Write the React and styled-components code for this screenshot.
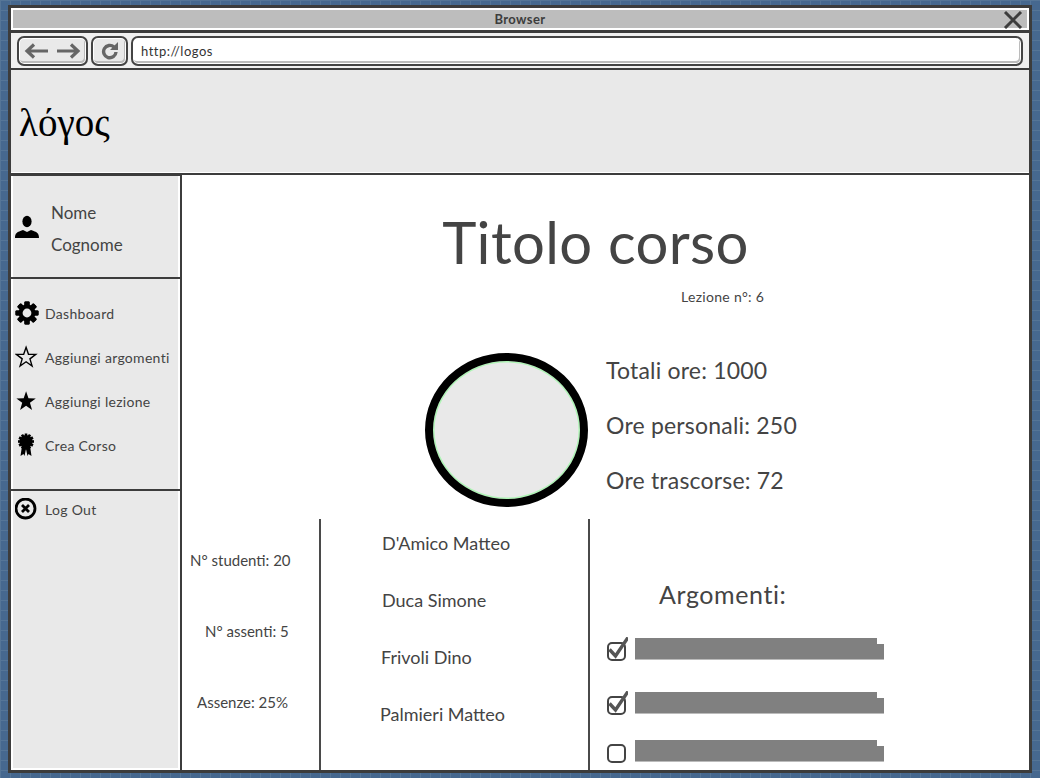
import React from "react";
import styled, { createGlobalStyle } from "styled-components";

const hand = `"Lato", "Noto Sans", sans-serif`;

const Global = createGlobalStyle`
  html, body { margin: 0; padding: 0; height: 778px; overflow: hidden; }
  body {
    font-family: ${hand};
    background-color: #46688f;
    background-image:
      linear-gradient(to right, #557597 1px, transparent 1px),
      linear-gradient(to bottom, #557597 1px, transparent 1px);
    background-size: 10px 10px;
  }
`;

const Frame = styled.div`
  box-sizing: border-box;
  margin: 5px 8px;
  width: 1024px;
  height: 768px;
  border: 3px solid #3c3c3c;
  background: #fff;
  display: flex;
  flex-direction: column;
`;
const TitleBar = styled.div`
  height: 22px;
  padding: 2px;
  box-sizing: border-box;
  flex: none;
`;
const TitleInner = styled.div`
  height: 18px;
  background: #bdbdbd;
  position: relative;
  display: flex;
  align-items: center;
  justify-content: center;
  font-size: 13px;
  font-weight: 700;
  color: #3c3c3c;
  letter-spacing: 0.4px;
`;
const CloseIcon = styled.svg`
  position: absolute;
  right: 4px;
  top: 1px;
`;
const Toolbar = styled.div`
  height: 40px;
  box-sizing: border-box;
  border-top: 3px solid #3c3c3c;
  border-bottom: 2px solid #3c3c3c;
  background: #f0f0f0;
  display: flex;
  align-items: center;
  gap: 3px;
  padding: 0 6px 0 6px;
  flex: none;
`;
const ToolBtn = styled.div`
  box-sizing: border-box;
  height: 30px;
  width: ${(p) => p.$w}px;
  border: 2px solid #444;
  border-radius: 7px;
  box-shadow: inset 0 0 0 1px #fff, inset -1px -2px 0 1px #bbb;
  background: #e9e9e9;
  display: flex;
  align-items: center;
  justify-content: center;
  gap: 7px;
  flex: none;
`;
const UrlBox = styled(ToolBtn)`
  flex: 1;
  background: #fff;
  justify-content: flex-start;
  padding-left: 8px;
  font-size: 13px;
  color: #333;
  letter-spacing: 0.5px;
`;
const Header = styled.div`
  height: 103px;
  box-sizing: border-box;
  background: #e9e9e9;
  border-bottom: 1px solid #fff;
  display: flex;
  align-items: center;
  padding: 3px 0 0 8px;
  font-family: "Liberation Serif", serif;
  font-size: 39px;
  color: #000;
  flex: none;
`;
const Body = styled.div`
  flex: 1;
  min-height: 0;
  border-top: 2px solid #3c3c3c;
  display: flex;
`;
const Sidebar = styled.aside`
  width: 171px;
  box-sizing: border-box;
  flex: none;
  background: #e9e9e9;
  border-right: 2px solid #3c3c3c;
  box-shadow: inset 2px 0 0 #fff, inset -2px 0 0 #fff, inset 0 -2px 0 #fff;
  display: flex;
  flex-direction: column;
`;
const UserBlock = styled.div`
  height: 104px;
  box-sizing: border-box;
  border-top: 1px solid #3c3c3c;
  border-bottom: 2px solid #3c3c3c;
  display: flex;
  align-items: center;
  gap: 12px;
  margin-left: -3px;
  padding-left: 7px;
`;
const UserName = styled.div`
  display: flex;
  flex-direction: column;
  gap: 12px;
  margin-top: 5px;
  font-size: 17px;
  line-height: 20px;
  color: #444;
`;
const Menu = styled.nav`
  height: 212px;
  box-sizing: border-box;
  border-bottom: 2px solid #3c3c3c;
  margin-left: -3px;
  padding: 20px 0 0 7px;
  display: flex;
  flex-direction: column;
  gap: 16px;
`;
const MenuItem = styled.div`
  height: 28px;
  display: flex;
  align-items: center;
  gap: 6px;
  font-size: 14px;
  letter-spacing: 0.3px;
  color: #444;
  white-space: nowrap;
`;
const LogoutItem = styled(MenuItem)`
  padding: 4px 0 0 4px;
  gap: 7px;
`;
const Main = styled.main`
  flex: 1;
  min-width: 0;
  display: flex;
  flex-direction: column;
`;
const Title = styled.h1`
  margin: 31px 0 0;
  padding-right: 20px;
  text-align: center;
  font-weight: 400;
  font-size: 58px;
  line-height: 72px;
  letter-spacing: 0.4px;
  color: #444;
`;
const Lesson = styled.div`
  margin: 10px 0 0 499px;
  font-size: 14px;
  line-height: 18px;
  letter-spacing: 0.3px;
  color: #444;
`;
const Stats = styled.section`
  display: flex;
  margin: 47px 0 0 243px;
  height: 166px;
  flex: none;
`;
const Gauge = styled.div`
  width: 163px;
  height: 154px;
  box-sizing: border-box;
  border-radius: 50%;
  border: 8px solid #000;
  background: #e9e9e9;
  box-shadow: inset 0 0 0 1.5px #aef5b5;
  flex: none;
`;
const StatList = styled.div`
  margin: 5px 0 0 18px;
  display: flex;
  flex-direction: column;
  gap: 30px;
  font-size: 23px;
  line-height: 25px;
  letter-spacing: 0.2px;
  color: #444;
`;
const Bottom = styled.section`
  flex: 1;
  min-height: 0;
  display: flex;
`;
const Numbers = styled.div`
  width: 137px;
  flex: none;
  display: flex;
  flex-direction: column;
  gap: 52px;
  padding-top: 32px;
  box-sizing: border-box;
  font-size: 15px;
  line-height: 19px;
  color: #444;
`;
const NumberLine = styled.div`
  padding-left: ${(p) => p.$x}px;
`;
const Students = styled.div`
  width: 271px;
  flex: none;
  box-sizing: border-box;
  border-left: 2px solid #4a4a4a;
  border-right: 2px solid #4a4a4a;
  padding-top: 12px;
  display: flex;
  flex-direction: column;
  gap: 33px;
  font-size: 18px;
  line-height: 24px;
  color: #444;
`;
const StudentLine = styled.div`
  padding-left: ${(p) => p.$x}px;
`;
const Topics = styled.div`
  flex: 1;
  padding: 60px 0 0 16px;
`;
const TopicsTitle = styled.div`
  font-size: 25px;
  line-height: 30px;
  color: #444;
  margin: 0 0 29px 53px;
  letter-spacing: 0.6px;
`;
const TopicRow = styled.div`
  display: flex;
  align-items: center;
  gap: 7px;
  height: 22px;
  margin-bottom: ${(p) => p.$gap}px;
`;
const Bar = styled.svg`
  flex: none;
`;

const Close = () => (
  <CloseIcon width="20" height="18" viewBox="0 0 20 18">
    <path d="M2 1 L18 17 M18 1 L2 17" stroke="#3c3c3c" strokeWidth="3" fill="none" />
  </CloseIcon>
);
const ArrowL = () => (
  <svg width="25" height="16" viewBox="0 0 25 16"><path d="M24 8H3M10 1.5 3 8l7 6.5" stroke="#666" strokeWidth="3.2" fill="none" /></svg>
);
const ArrowR = () => (
  <svg width="25" height="16" viewBox="0 0 25 16"><path d="M1 8h20M15 1.5 22 8l-7 6.5" stroke="#666" strokeWidth="3.2" fill="none" /></svg>
);
const Reload = () => (
  <svg width="18" height="19" viewBox="0 0 18 19"><path d="M13 6A6.2 6.2 0 1 0 15 11" stroke="#666" strokeWidth="3.4" fill="none" /><path d="M17 1v8H9z" fill="#666" /></svg>
);
const UserIcon = () => (
  <svg width="24" height="24" viewBox="0 0 24 24"><ellipse cx="12" cy="6.5" rx="4.6" ry="5.8" /><path d="M0 23c0-5 2-6 8-8l4 2 4-2c6 2 8 3 8 8z" /></svg>
);
const Gear = () => {
  const teeth = [0, 45, 90, 135, 180, 225, 270, 315];
  return (
    <svg width="24" height="24" viewBox="0 0 24 24">
      {teeth.map((a) => <rect key={a} x="9.4" y="0.5" width="5.2" height="23" rx="1" transform={`rotate(${a} 12 12)`} />)}
      <circle cx="12" cy="12" r="8.4" />
      <circle cx="12" cy="12" r="4.4" fill="#e9e9e9" />
    </svg>
  );
};
const starPts = "12,1.5 14.6,9 22.5,9.2 16.2,14 18.5,21.8 12,17.2 5.5,21.8 7.8,14 1.5,9.2 9.4,9";
const StarO = () => <svg width="24" height="24" viewBox="0 -1 26 26"><polygon points={starPts} fill="none" stroke="#000" strokeWidth="1.5" /></svg>;
const StarF = () => <svg width="24" height="24" viewBox="0 -1 26 26"><polygon points={starPts} /></svg>;
const Ribbon = () => {
  const a = [0, 30, 60, 90, 120, 150];
  return (
    <svg width="24" height="24" viewBox="0 0 24 24">
      <g transform="translate(-1 -3.5)">
        {a.map((r) => <rect key={r} x="10.7" y="4" width="2.6" height="16" transform={`rotate(${r} 12 12)`} />)}
        <circle cx="12" cy="12" r="6.5" />
      </g>
      <path d="M7 13 5.500 23 8.500 21l1 2 1.500-7 1.500 7 1-2 3 2L15 13z" />
    </svg>
  );
};
const XCircle = () => (
  <svg width="23" height="23" viewBox="0 0 23 23">
    <circle cx="10.5" cy="10.500" r="9.5" fill="none" stroke="#000" strokeWidth="2.8" />
    <path d="M7 7l7 7M14 7l-7 7" stroke="#000" strokeWidth="2.8" />
  </svg>
);
const Check = ({ on }) => (
  <svg width="22" height="24" viewBox="0 0 22 24">
    <rect x="2" y="6" width="17" height="17" rx="4" fill="#fff" stroke="#444" strokeWidth="2" />
    {on && <path d="M3.500 12.500l6 6.500L22 0.500" fill="none" stroke="#555" strokeWidth="3.4" />}
  </svg>
);
const TopicBar = () => (
  <Bar width="249" height="22" viewBox="0 0 249 22">
    <path d="M0 0H242V6H249V21H0z" fill="#808080" />
    <path d="M0 21H249V22H0z" fill="#bbb" />
  </Bar>
);

export default function App() {
  return (
    <>
      <Global />
      <Frame>
        <TitleBar>
          <TitleInner>Browser<Close /></TitleInner>
        </TitleBar>
        <Toolbar>
          <ToolBtn $w={71}><ArrowL /><ArrowR /></ToolBtn>
          <ToolBtn $w={37}><Reload /></ToolBtn>
          <UrlBox>http://logos</UrlBox>
        </Toolbar>
        <Header>λόγος</Header>
        <Body>
          <Sidebar>
            <UserBlock>
              <UserIcon />
              <UserName><span>Nome</span><span>Cognome</span></UserName>
            </UserBlock>
            <Menu>
              <MenuItem><Gear />Dashboard</MenuItem>
              <MenuItem><StarO />Aggiungi argomenti</MenuItem>
              <MenuItem><StarF />Aggiungi lezione</MenuItem>
              <MenuItem><Ribbon />Crea Corso</MenuItem>
            </Menu>
            <LogoutItem><XCircle />Log Out</LogoutItem>
          </Sidebar>
          <Main>
            <Title>Titolo corso</Title>
            <Lesson>Lezione n°: 6</Lesson>
            <Stats>
              <Gauge />
              <StatList>
                <span>Totali ore: 1000</span>
                <span>Ore personali: 250</span>
                <span>Ore trascorse: 72</span>
              </StatList>
            </Stats>
            <Bottom>
              <Numbers>
                <NumberLine $x={8}>N° studenti: 20</NumberLine>
                <NumberLine $x={23}>N° assenti: 5</NumberLine>
                <NumberLine $x={15}>Assenze: 25%</NumberLine>
              </Numbers>
              <Students>
                <StudentLine $x={61}>D'Amico Matteo</StudentLine>
                <StudentLine $x={61}>Duca Simone</StudentLine>
                <StudentLine $x={60}>Frivoli Dino</StudentLine>
                <StudentLine $x={59}>Palmieri Matteo</StudentLine>
              </Students>
              <Topics>
                <TopicsTitle>Argomenti:</TopicsTitle>
                <TopicRow $gap={32}><Check on /><TopicBar /></TopicRow>
                <TopicRow $gap={26}><Check on /><TopicBar /></TopicRow>
                <TopicRow $gap={0}><Check /><TopicBar /></TopicRow>
              </Topics>
            </Bottom>
          </Main>
        </Body>
      </Frame>
    </>
  );
}
